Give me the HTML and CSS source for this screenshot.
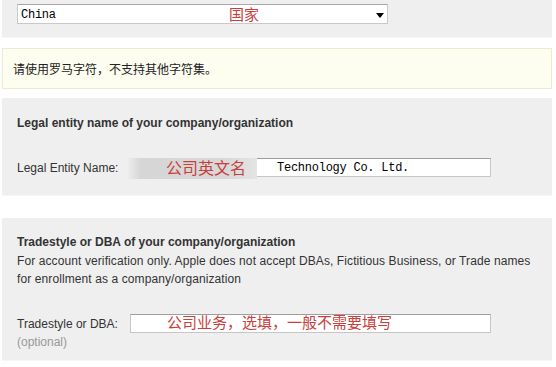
FILE: index.html
```html
<!DOCTYPE html>
<html lang="en">
  <head>
    <meta charset="UTF-8" />
    <title>enroll</title>
    <link rel="stylesheet" href="styles.css">
  </head>
  <body>
    <div class="page">
      <div class="panel country">
        <div class="select">
          <span class="value">China</span>
          <span class="note note-country">国家</span>
          <span class="arrow"></span>
        </div>
      </div>

      <div class="notice">请使用罗马字符，不支持其他字符集。</div>

      <div class="panel legal">
        <div class="heading">Legal entity name of your company/organization</div>
        <div class="row">
          <label class="label">Legal Entity Name:</label>
          <div class="field">
            <span class="blur"></span>
            <span class="value name">Technology Co. Ltd.</span>
            <span class="note note-name">公司英文名</span>
          </div>
        </div>
      </div>

      <div class="panel dba">
        <div class="heading">Tradestyle or DBA of your company/organization</div>
        <p class="desc">For account verification only. Apple does not accept DBAs, Fictitious Business, or Trade names for enrollment as a company/organization</p>
        <div class="row">
          <div class="label">
            Tradestyle or DBA:
            <span class="optional">(optional)</span>
          </div>
          <div class="field">
            <span class="note note-dba">公司业务，选填，一般不需要填写</span>
          </div>
        </div>
      </div>
    </div>
  </body>
</html>
```

FILE: styles.css
```css
html,
body {
  margin: 0;
  background: #ffffff;
}
body {
  font-family: "Liberation Sans", Arial, "Noto Sans CJK SC", sans-serif;
  font-size: 12px;
  color: #333333;
}
.page {
  width: 550px;
  margin-left: 2px;
}

.panel {
  background-color: #efefef;
  border-bottom: 1px solid #f6f6f6;
}
.country {
  height: 38px;
  padding: 4px 0 0 15px;
  box-sizing: border-box;
}
.select {
  position: relative;
  width: 371px;
  height: 20px;
  box-sizing: border-box;
  background: #ffffff;
  border: 1px solid #c9c9c9;
  border-top-color: #a8a8a8;
}
.select .value {
  position: absolute;
  left: 3px;
  top: 3px;
}
.value {
  font-family: "Liberation Mono", "Courier New", monospace;
  font-size: 12px;
  letter-spacing: -0.25px;
  color: #000000;
}
.arrow {
  position: absolute;
  right: 3px;
  top: 8px;
  border-left: 4px solid transparent;
  border-right: 4px solid transparent;
  border-top: 5px solid #000000;
}

.note {
  position: absolute;
  font-family: "Noto Sans CJK SC", sans-serif;
  font-size: 15px;
  line-height: 18px;
  color: #c8403c;
}
.note-country {
  left: 211px;
  top: 0;
}

.notice {
  margin-top: 10px;
  height: 41px;
  box-sizing: border-box;
  padding-left: 10px;
  line-height: 39px;
  background: #fdfdf0;
  border: 1px solid #ecebd2;
  font-family: "Noto Sans CJK SC", sans-serif;
  font-size: 12px;
  color: #222222;
}

.legal {
  margin-top: 9px;
  height: 98px;
  padding: 18px 15px 0;
  box-sizing: border-box;
}
.dba {
  margin-top: 22px;
  height: 143px;
  padding: 17px 15px 0;
  box-sizing: border-box;
}
.heading {
  font-weight: bold;
  line-height: 15px;
}
.desc {
  margin: 2px 0 0;
  font-size: 12px;
  line-height: 18px;
  letter-spacing: 0.1px;
}

.row {
  display: flex;
  align-items: flex-start;
}
.legal .row {
  margin-top: 27px;
}
.dba .row {
  margin-top: 26px;
}
.label {
  width: 113px;
  flex-shrink: 0;
  padding-top: 1px;
  line-height: 18px;
}
.optional {
  display: block;
  color: #999999;
}
.field {
  position: relative;
  width: 361px;
  height: 19px;
  box-sizing: border-box;
  background: #ffffff;
  border: 1px solid #c6c6c6;
  border-top-color: #9e9e9e;
}
.field .name {
  position: absolute;
  left: 146px;
  top: 2px;
}
.blur {
  position: absolute;
  left: -3px;
  top: -1px;
  width: 129px;
  height: 21px;
  background: linear-gradient(90deg, #ececec 0%, #d6d6d6 10%, #d8d8d8 75%, #e4e4e4 100%);
}
.note-name {
  left: 35px;
  top: -1px;
  font-size: 16px;
}
.note-dba {
  left: 36px;
  top: -2px;
  font-size: 15px;
}
```
